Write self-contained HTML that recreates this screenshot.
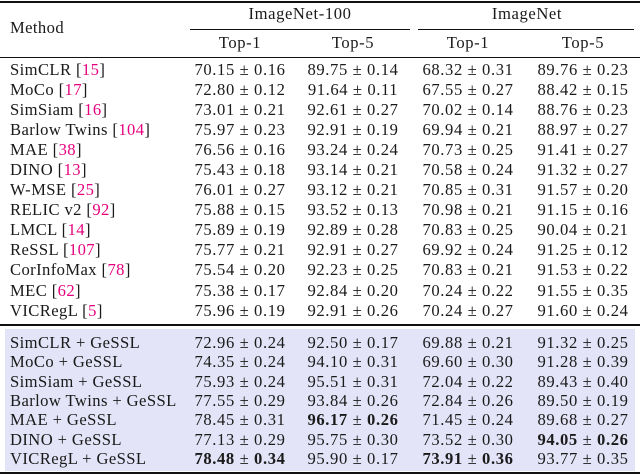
<!DOCTYPE html>
<html><head><style>
body{margin:0;width:640px;height:476px;background:#fff;position:relative;overflow:hidden;font-family:"Liberation Serif",serif;font-size:16.6px;color:#1a1a1a;}
.r{position:absolute;left:0;width:640px;height:20px;line-height:20px;}
.r span{position:absolute;top:0;white-space:nowrap;letter-spacing:0.6px;}
.m{left:10px;letter-spacing:0.4px!important;}
.c1{left:240px;transform:translateX(-50%);}
.c2{left:353px;transform:translateX(-50%);}
.c3{left:468px;transform:translateX(-50%);}
.c4{left:583px;transform:translateX(-50%);}
.l{position:absolute;background:#111;}
.ref{color:#e6007e;}
b{font-weight:bold;}
</style></head><body>
<div style="position:absolute;left:5px;top:329px;width:630px;height:142px;background:#e4e4f8"></div>
<div class="l" style="left:0;top:1px;width:640px;height:1.5px"></div>
<div class="l" style="left:190px;top:29px;width:220px;height:1px"></div>
<div class="l" style="left:418px;top:29px;width:216px;height:1px"></div>
<div class="l" style="left:0;top:57px;width:640px;height:1px"></div>
<div class="l" style="left:0;top:324px;width:640px;height:1.5px"></div>
<div class="l" style="left:0;top:472px;width:640px;height:1.5px"></div>
<div class="r" style="top:18px"><span class="m">Method</span></div>
<div class="r" style="top:4px"><span style="left:300px;transform:translateX(-50%)">ImageNet-100</span><span style="left:527px;transform:translateX(-50%)">ImageNet</span></div>
<div class="r" style="top:33px"><span class="c1">Top-1</span><span class="c2">Top-5</span><span class="c3">Top-1</span><span class="c4">Top-5</span></div>

<div class="r" style="top:60px"><span class="m">SimCLR [<i class="ref" style="font-style:normal">15</i>]</span><span class="c1">70.15 ± 0.16</span><span class="c2">89.75 ± 0.14</span><span class="c3">68.32 ± 0.31</span><span class="c4">89.76 ± 0.23</span></div>
<div class="r" style="top:80px"><span class="m">MoCo [<i class="ref" style="font-style:normal">17</i>]</span><span class="c1">72.80 ± 0.12</span><span class="c2">91.64 ± 0.11</span><span class="c3">67.55 ± 0.27</span><span class="c4">88.42 ± 0.15</span></div>
<div class="r" style="top:100px"><span class="m">SimSiam [<i class="ref" style="font-style:normal">16</i>]</span><span class="c1">73.01 ± 0.21</span><span class="c2">92.61 ± 0.27</span><span class="c3">70.02 ± 0.14</span><span class="c4">88.76 ± 0.23</span></div>
<div class="r" style="top:120px"><span class="m">Barlow Twins [<i class="ref" style="font-style:normal">104</i>]</span><span class="c1">75.97 ± 0.23</span><span class="c2">92.91 ± 0.19</span><span class="c3">69.94 ± 0.21</span><span class="c4">88.97 ± 0.27</span></div>
<div class="r" style="top:140px"><span class="m">MAE [<i class="ref" style="font-style:normal">38</i>]</span><span class="c1">76.56 ± 0.16</span><span class="c2">93.24 ± 0.24</span><span class="c3">70.73 ± 0.25</span><span class="c4">91.41 ± 0.27</span></div>
<div class="r" style="top:160px"><span class="m">DINO [<i class="ref" style="font-style:normal">13</i>]</span><span class="c1">75.43 ± 0.18</span><span class="c2">93.14 ± 0.21</span><span class="c3">70.58 ± 0.24</span><span class="c4">91.32 ± 0.27</span></div>
<div class="r" style="top:180px"><span class="m">W-MSE [<i class="ref" style="font-style:normal">25</i>]</span><span class="c1">76.01 ± 0.27</span><span class="c2">93.12 ± 0.21</span><span class="c3">70.85 ± 0.31</span><span class="c4">91.57 ± 0.20</span></div>
<div class="r" style="top:200px"><span class="m">RELIC v2 [<i class="ref" style="font-style:normal">92</i>]</span><span class="c1">75.88 ± 0.15</span><span class="c2">93.52 ± 0.13</span><span class="c3">70.98 ± 0.21</span><span class="c4">91.15 ± 0.16</span></div>
<div class="r" style="top:220px"><span class="m">LMCL [<i class="ref" style="font-style:normal">14</i>]</span><span class="c1">75.89 ± 0.19</span><span class="c2">92.89 ± 0.28</span><span class="c3">70.83 ± 0.25</span><span class="c4">90.04 ± 0.21</span></div>
<div class="r" style="top:240px"><span class="m">ReSSL [<i class="ref" style="font-style:normal">107</i>]</span><span class="c1">75.77 ± 0.21</span><span class="c2">92.91 ± 0.27</span><span class="c3">69.92 ± 0.24</span><span class="c4">91.25 ± 0.12</span></div>
<div class="r" style="top:260px"><span class="m">CorInfoMax [<i class="ref" style="font-style:normal">78</i>]</span><span class="c1">75.54 ± 0.20</span><span class="c2">92.23 ± 0.25</span><span class="c3">70.83 ± 0.21</span><span class="c4">91.53 ± 0.22</span></div>
<div class="r" style="top:281px"><span class="m">MEC [<i class="ref" style="font-style:normal">62</i>]</span><span class="c1">75.38 ± 0.17</span><span class="c2">92.84 ± 0.20</span><span class="c3">70.24 ± 0.22</span><span class="c4">91.55 ± 0.35</span></div>
<div class="r" style="top:301px"><span class="m">VICRegL [<i class="ref" style="font-style:normal">5</i>]</span><span class="c1">75.96 ± 0.19</span><span class="c2">92.91 ± 0.26</span><span class="c3">70.24 ± 0.27</span><span class="c4">91.60 ± 0.24</span></div>

<div class="r" style="top:333px"><span class="m">SimCLR + GeSSL</span><span class="c1">72.96 ± 0.24</span><span class="c2">92.50 ± 0.17</span><span class="c3">69.88 ± 0.21</span><span class="c4">91.32 ± 0.25</span></div>
<div class="r" style="top:352px"><span class="m">MoCo + GeSSL</span><span class="c1">74.35 ± 0.24</span><span class="c2">94.10 ± 0.31</span><span class="c3">69.60 ± 0.30</span><span class="c4">91.28 ± 0.39</span></div>
<div class="r" style="top:372px"><span class="m">SimSiam + GeSSL</span><span class="c1">75.93 ± 0.24</span><span class="c2">95.51 ± 0.31</span><span class="c3">72.04 ± 0.22</span><span class="c4">89.43 ± 0.40</span></div>
<div class="r" style="top:391px"><span class="m">Barlow Twins + GeSSL</span><span class="c1">77.55 ± 0.29</span><span class="c2">93.84 ± 0.26</span><span class="c3">72.84 ± 0.26</span><span class="c4">89.50 ± 0.19</span></div>
<div class="r" style="top:410px"><span class="m">MAE + GeSSL</span><span class="c1">78.45 ± 0.31</span><span class="c2"><b>96.17</b> ± <b>0.26</b></span><span class="c3">71.45 ± 0.24</span><span class="c4">89.68 ± 0.27</span></div>
<div class="r" style="top:430px"><span class="m">DINO + GeSSL</span><span class="c1">77.13 ± 0.29</span><span class="c2">95.75 ± 0.30</span><span class="c3">73.52 ± 0.30</span><span class="c4"><b>94.05</b> ± <b>0.26</b></span></div>
<div class="r" style="top:449px"><span class="m">VICRegL + GeSSL</span><span class="c1"><b>78.48</b> ± <b>0.34</b></span><span class="c2">95.90 ± 0.17</span><span class="c3"><b>73.91</b> ± <b>0.36</b></span><span class="c4">93.77 ± 0.35</span></div>
</body></html>
